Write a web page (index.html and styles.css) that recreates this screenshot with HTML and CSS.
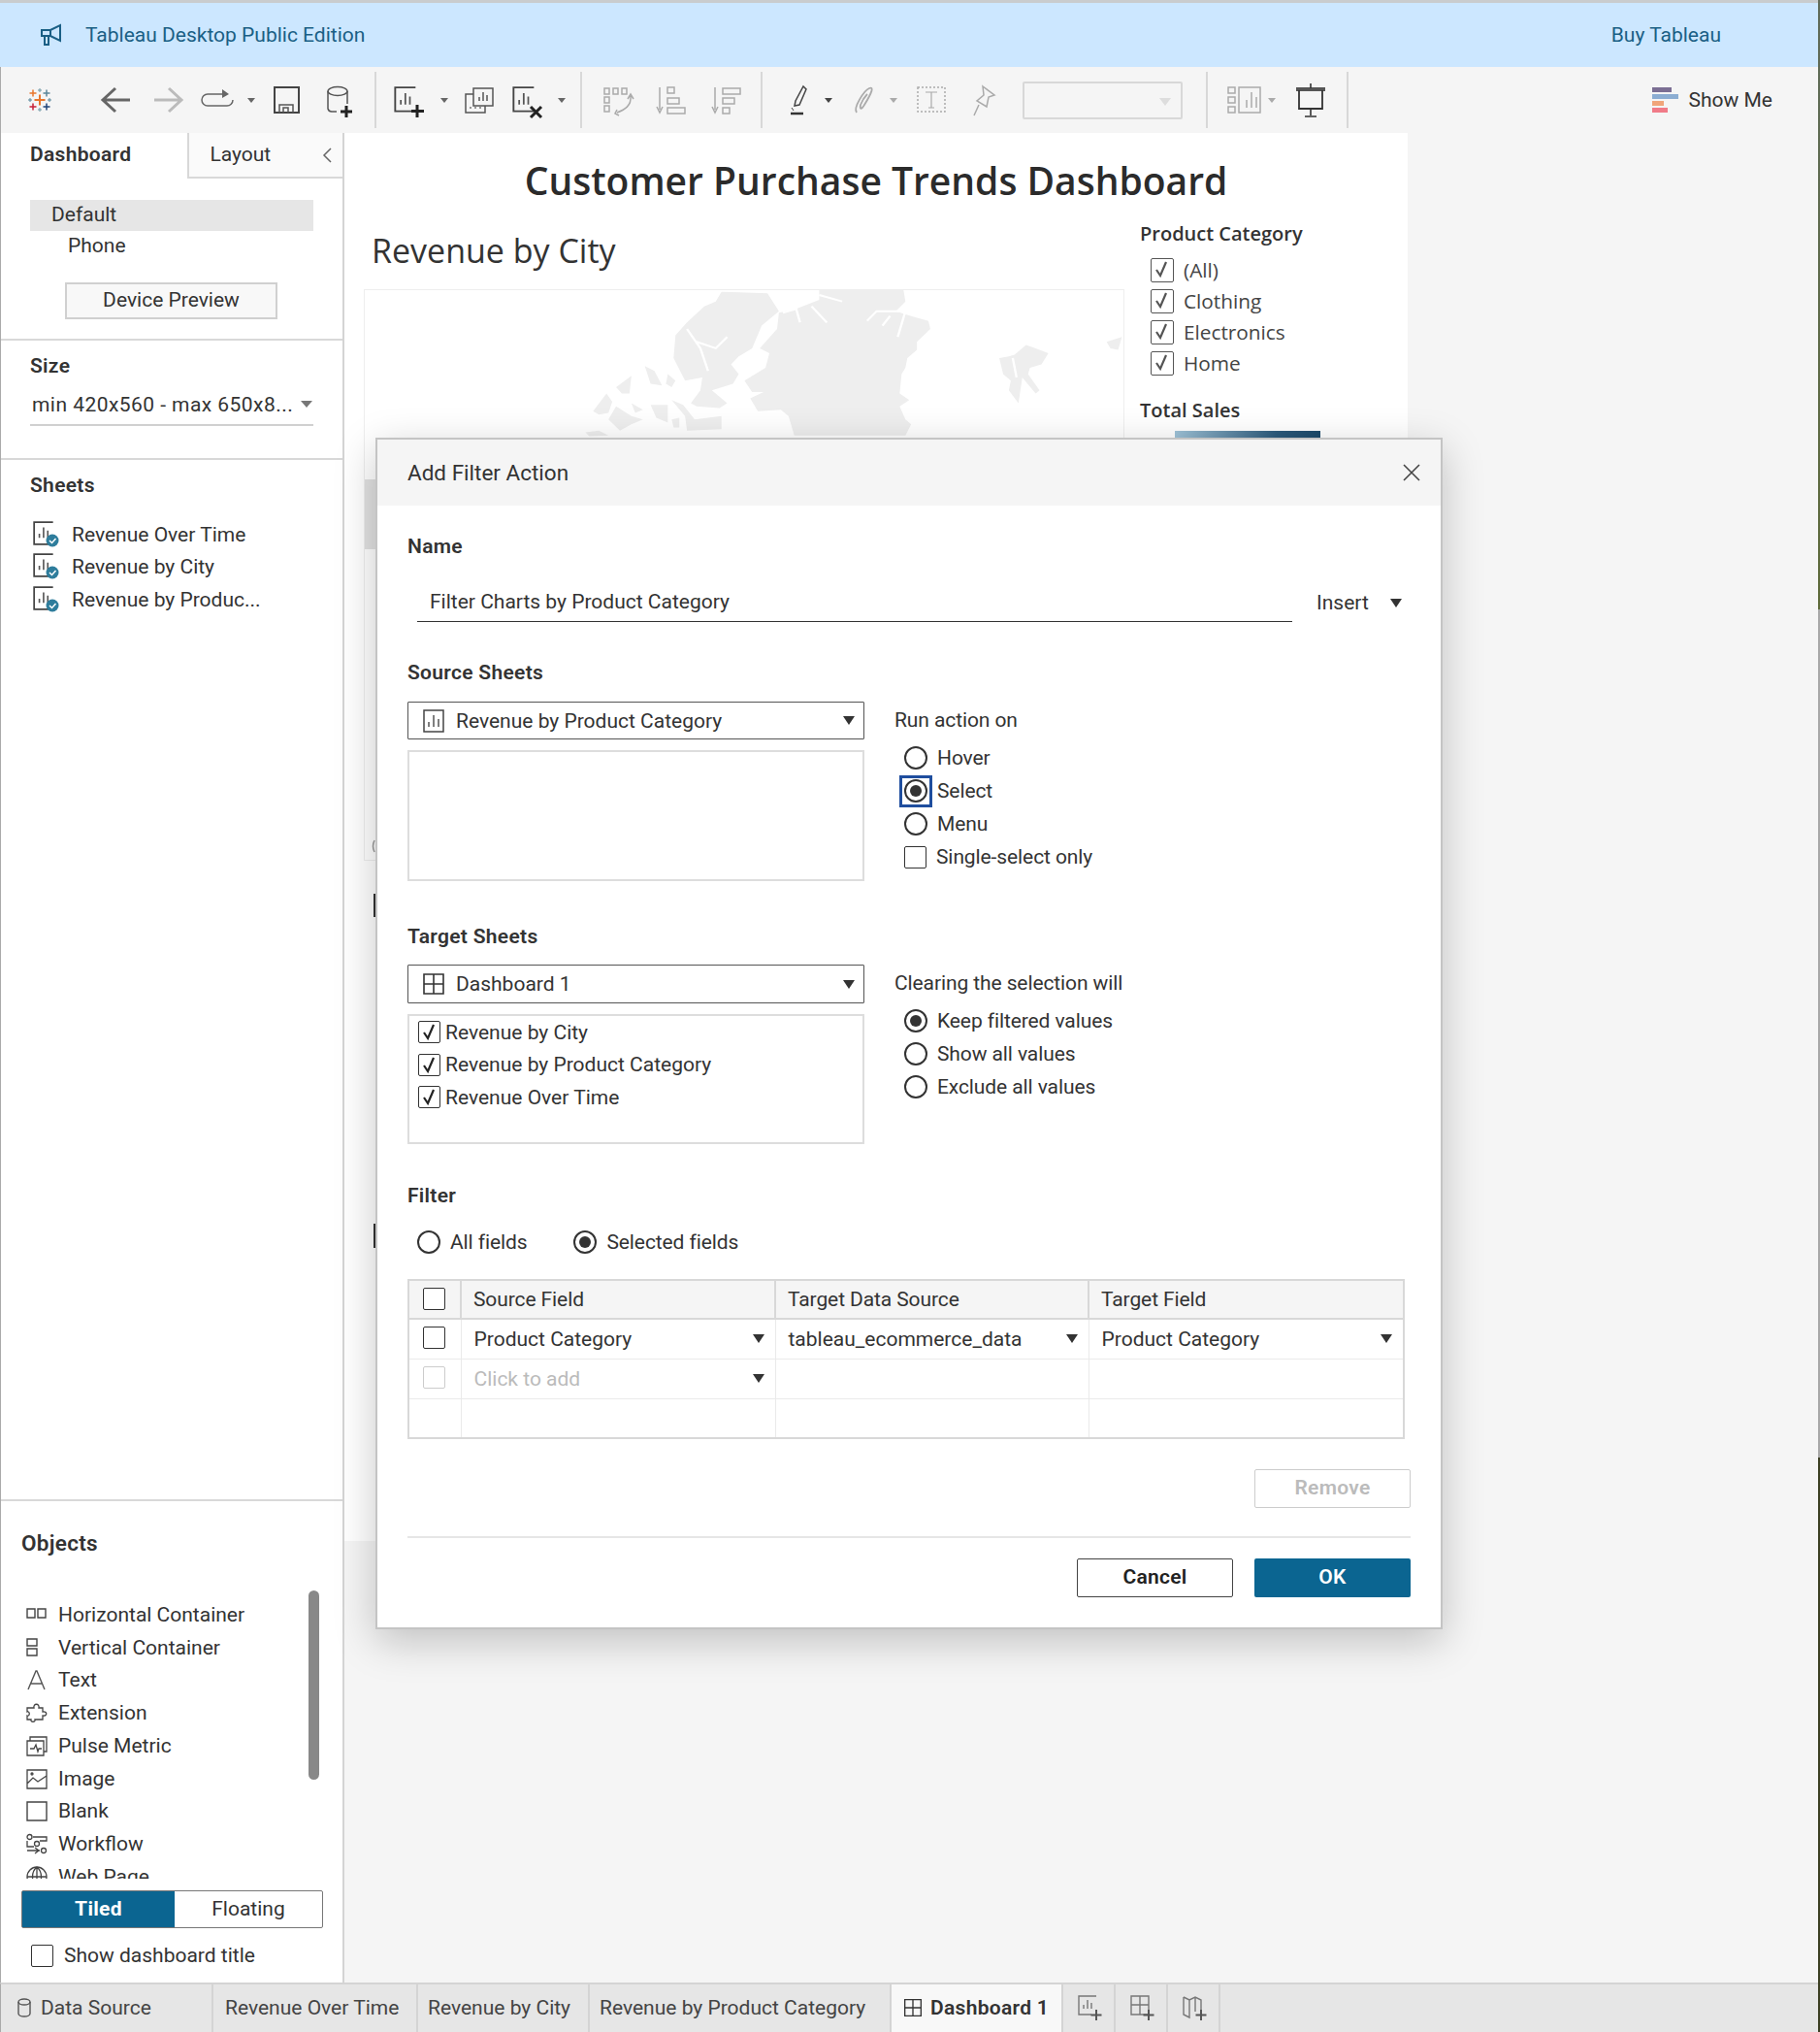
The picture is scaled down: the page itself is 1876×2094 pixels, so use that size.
FILE: index.html
```html
<!DOCTYPE html>
<html lang="en">
<head>
  <meta charset="UTF-8">
  <title>Tableau Desktop Public Edition</title>
  <link rel="stylesheet" href="styles.css">
</head>
<body>
  <svg class="defs" width="0" height="0">
    <symbol id="sheet" viewBox="0 0 24 24">
      <path d="M20 1H2V22H20" fill="none" stroke="#444" stroke-width="1.6"/>
      <path d="M7 16V12M11 16V6M15 16V9" fill="none" stroke="#555" stroke-width="1.5"/>
    </symbol>
    <symbol id="sheet-closed" viewBox="0 0 24 24">
      <path d="M2 1H22V23H2Z" fill="none" stroke="#444" stroke-width="1.5"/>
      <path d="M7 18V13M12 18V6M17 18V10" fill="none" stroke="#555" stroke-width="1.5"/>
    </symbol>
    <symbol id="dash" viewBox="0 0 24 24">
      <path d="M2 2H22V22H2ZM12 2V22M2 12H22" fill="none" stroke="#333" stroke-width="1.6"/>
    </symbol>
    <symbol id="check" viewBox="0 0 22 24">
      <path d="M6 13L10 19L16 5" fill="none" stroke="currentColor" stroke-width="2.200"/>
    </symbol>
  </svg>

  <div class="app">
    <div class="topline"></div>
    <header class="banner">
      <svg class="banner-icon" width="24" height="24" viewBox="0 0 24 24">
        <path d="M2 7H11L21 2V18L11 13H2ZM11 7V13M5 13V22H9V13" fill="none" stroke="#1a5f85" stroke-width="2"/>
      </svg>
      <span class="banner-title">Tableau Desktop Public Edition</span>
      <span class="banner-buy">Buy Tableau</span>
    </header>

    <div class="toolbar">
      <!-- logo -->
      <div class="tool-group logo-group">
        <svg width="24" height="24" viewBox="0 0 24 24" fill="none">
          <path d="M12 6.500V17.500M6.500 12H17.500" stroke="#e8762c" stroke-width="2"/>
          <path d="M5 1.500V8.500M1.500 5H8.500" stroke="#e8762c" stroke-width="1.500"/>
          <path d="M19 1.500V8.500M15.500 5H22.500" stroke="#5b879b" stroke-width="1.500"/>
          <path d="M5 15.500V22.500M1.500 19H8.500" stroke="#c72037" stroke-width="1.500"/>
          <path d="M19 15.500V22.500M15.500 19H22.500" stroke="#1f447a" stroke-width="1.500"/>
          <path d="M12 0V4M10 2H14M12 20V24M10 22H14" stroke="#7099a6" stroke-width="1"/>
          <path d="M2 10V14M0 12H4M22 10V14M20 12H24" stroke="#59879b" stroke-width="1"/>
        </svg>
      </div>

      <div class="tool-group g2">
        <svg width="54" height="40"><path d="M41 20H13M26 8L13 20L26 32" fill="none" stroke="#666" stroke-width="3"/></svg>
        <svg width="52" height="40"><path d="M12 20H40M27 8L40 20L27 32" fill="none" stroke="#bbb" stroke-width="3"/></svg>
        <svg width="50" height="40"><path d="M30 14H15a6 6 0 0 0 0 12H35a6 6 0 0 0 6 -6" fill="none" stroke="#666" stroke-width="1.500"/><path d="M30 9L37 14L30 18Z" fill="#666"/></svg>
        <svg width="20" height="40"><path d="M6 18H14L10 23Z" fill="#666"/></svg>
        <svg width="52" height="40"><path d="M14 7H39V33H14Z" fill="none" stroke="#444" stroke-width="2"/><path d="M19 33V25H33V33M23 33V28H28V33" fill="none" stroke="#555" stroke-width="1.500"/></svg>
        <svg width="56" height="40"><ellipse cx="27" cy="11" rx="10" ry="4.500" fill="none" stroke="#555" stroke-width="1.500"/><path d="M17 11V29a4 4 0 0 0 4 3H26M37 11V24" fill="none" stroke="#555" stroke-width="1.500"/><path d="M36 26V38M30 32H42" stroke="#222" stroke-width="3"/></svg>
      </div>
      <div class="tool-sep"></div>

      <div class="tool-group g3">
        <svg width="50" height="40"><use href="#sheet" x="8" y="6" width="28" height="28"/><path d="M33 25V38M27 31.500H40" stroke="#222" stroke-width="3"/></svg>
        <svg width="22" height="40"><path d="M7 18H15L11 23Z" fill="#666"/></svg>
        <svg width="50" height="40"><path d="M19 8H39V26H19ZM19 14H11V33H31V26" fill="none" stroke="#555" stroke-width="1.500"/><path d="M25 21V17M29 21V12M33 21V15" stroke="#555" stroke-width="1.500"/><path d="M16 29V27M21 29V27M26 29V27" stroke="#777" stroke-width="1.500"/></svg>
        <svg width="50" height="40"><use href="#sheet" x="8" y="6" width="28" height="28"/><path d="M28 27L39 38M39 27L28 38" stroke="#222" stroke-width="3"/></svg>
        <svg width="20" height="40"><path d="M6 18H14L10 23Z" fill="#666"/></svg>
      </div>
      <div class="tool-sep"></div>

      <div class="tool-group g4">
        <svg width="55" height="40" fill="none" stroke="#aaa" stroke-width="1.500"><path d="M12 8h5v6h-5zM21 8h5v6h-5zM30 8h5v6h-5zM12 17h5v6h-5zM12 26h5v6h-5z"/><path d="M39 16C40 26 33 30 25 33M25 30L23 34L27 36M36 19L39 14L42 19"/></svg>
        <svg width="62" height="40" fill="none" stroke="#aaa" stroke-width="1.500"><path d="M14 7V30M11 27L14 33L17 27"/><path d="M22 7h7v6h-7zM22 18h12v6h-12zM22 28h18v6h-18z"/></svg>
        <svg width="52" height="40" fill="none" stroke="#aaa" stroke-width="1.500"><path d="M9 7V30M6 27L9 33L12 27"/><path d="M17 8h18v6h-18zM17 18h12v6h-12zM17 28h7v6h-7z"/></svg>
      </div>
      <div class="tool-sep"></div>

      <div class="tool-group g5">
        <svg width="44" height="40" fill="none"><path d="M27 6L30 9L23 25L18 26L19 21Z" stroke="#444" stroke-width="1.500"/><path d="M14 34H27" stroke="#333" stroke-width="2.500"/><path d="M15 28L17 31" stroke="#444"/></svg>
        <svg width="20" height="40"><path d="M5 18H13L9 23Z" fill="#444"/></svg>
        <svg width="50" height="40" fill="none"><path d="M18 33C14 28 26 10 31 8C36 6 34 12 26 25C23 30 21 30 22 25C24 20 27 16 29 14" stroke="#aaa" stroke-width="1.800"/></svg>
        <svg width="22" height="40"><path d="M2 18H10L6 23Z" fill="#aaa"/></svg>
        <svg width="46" height="40" fill="none"><path d="M9 7H37V32H9Z" stroke="#aaa" stroke-width="1.500" stroke-dasharray="2 2"/><path d="M17 12H29M23 12V28M20 28H26" stroke="#aaa" stroke-width="1.200"/></svg>
        <svg width="62" height="40" fill="none"><path d="M30 6L42 15L36 17L34 27L24 21L31 15ZM26 25L21 36" stroke="#aaa" stroke-width="1.500"/></svg>
        <div class="tool-combo"><i class="caret-light"></i></div>
      </div>
      <div class="tool-sep"></div>

      <div class="tool-group g6">
        <svg width="40" height="40" fill="none" stroke="#aaa" stroke-width="1.500"><path d="M3 7h7v6h-7zM3 17h7v6h-7zM3 27h7v6h-7zM14 7H36V33H14ZM22 28V20M27 28V12M32 28V17"/></svg>
        <svg width="23" height="40"><path d="M4 18H12L8 23Z" fill="#aaa"/></svg>
        <svg width="50" height="40" fill="none"><path d="M10 9H40" stroke="#555" stroke-width="4"/><path d="M13 10V29H37V10" stroke="#333" stroke-width="1.800"/><path d="M25 29V36M19 37H31M25 3V8" stroke="#333" stroke-width="1.600"/></svg>
      </div>
      <div class="tool-sep"></div>

      <div class="show-me">
        <svg width="32" height="28"><path d="M1 1H21V6H1Z" fill="#7b6e93"/><path d="M1 8H28V13H1Z" fill="#8cadd2"/><path d="M1 15H13V20H1Z" fill="#f0a57a"/><path d="M1 22H17V27H1Z" fill="#f07b88"/></svg>
        <span>Show Me</span>
      </div>
    </div>

    <div class="workspace">
      <aside class="side">
        <div class="side-tabs">
          <div class="side-tab active">Dashboard</div>
          <div class="side-tab">Layout
            <svg class="collapse" width="12" height="18"><path d="M10 2L3 9L10 16" fill="none" stroke="#666" stroke-width="1.500"/></svg>
          </div>
        </div>

        <section class="device">
          <div class="device-row selected">Default</div>
          <div class="device-row phone">Phone</div>
          <div class="device-btn">Device Preview</div>
        </section>

        <section class="size">
          <h4>Size</h4>
          <div class="size-select">min 420x560 - max 650x8...<i class="caret gray"></i></div>
        </section>

        <section class="sheets">
          <h4>Sheets</h4>
          <ul class="sheet-list">
            <li><svg width="30" height="28"><use href="#sheet" x="0" y="0" width="26" height="26"/><circle cx="21" cy="20" r="6.500" fill="#2e7d9c"/><path d="M18 20L20.500 22.500L24.500 18" fill="none" stroke="#fff" stroke-width="1.500"/></svg>Revenue Over Time</li>
            <li><svg width="30" height="28"><use href="#sheet" x="0" y="0" width="26" height="26"/><circle cx="21" cy="20" r="6.500" fill="#2e7d9c"/><path d="M18 20L20.500 22.500L24.500 18" fill="none" stroke="#fff" stroke-width="1.500"/></svg>Revenue by City</li>
            <li><svg width="30" height="28"><use href="#sheet" x="0" y="0" width="26" height="26"/><circle cx="21" cy="20" r="6.500" fill="#2e7d9c"/><path d="M18 20L20.500 22.500L24.500 18" fill="none" stroke="#fff" stroke-width="1.500"/></svg>Revenue by Produc...</li>
          </ul>
        </section>

        <section class="objects">
          <h4>Objects</h4>
          <div class="object-wrap">
            <ul class="object-list">
              <li><svg width="22" height="22" fill="none" stroke="#444" stroke-width="1.400"><path d="M1 5h8v9h-8zM12 5h8v9h-8z"/></svg>Horizontal Container</li>
              <li><svg width="22" height="22" fill="none" stroke="#444" stroke-width="1.400"><path d="M1 2h10v7h-10zM1 12h10v7h-10z"/></svg>Vertical Container</li>
              <li><svg width="22" height="22" fill="none" stroke="#555" stroke-width="1.400"><path d="M2 21L10 2H11L19 21M5 15H16"/></svg>Text</li>
              <li><svg width="22" height="22" fill="none" stroke="#444" stroke-width="1.300"><path d="M8 6C7 1 14 1 13 6H17V10C22 9 22 15 17 14V18H9C10 21 4 21 5 18H1V14C4 15 4 9 1 10V6Z"/></svg>Extension</li>
              <li><svg width="22" height="22" fill="none" stroke="#444" stroke-width="1.300"><path d="M1 6h17v15h-17zM4 6V2H21V17H18M4 14H8L10 10L12 17L13 14H16"/></svg>Pulse Metric</li>
              <li><svg width="22" height="22" fill="none" stroke="#444" stroke-width="1.300"><path d="M1 2h20v19h-20zM1 16L7 10L12 14L21 8"/><circle cx="6" cy="6" r="1"/></svg>Image</li>
              <li><svg width="22" height="22" fill="none" stroke="#444" stroke-width="1.400"><path d="M1 2h20v19h-20z"/></svg>Blank</li>
              <li><svg width="22" height="22" fill="none" stroke="#444" stroke-width="1.300"><circle cx="3.500" cy="4" r="2.500"/><circle cx="11" cy="11" r="2.500"/><circle cx="18" cy="18" r="2.500"/><path d="M7 4H21V8H14M1 8V14H8M1 18H14M9 15L13 18L9 21"/></svg>Workflow</li>
              <li><svg width="22" height="22" fill="none" stroke="#444" stroke-width="1.300"><circle cx="11" cy="11" r="10"/><path d="M1 11H21M1 16H21M11 1V21M11 1C5 6 5 16 11 21M11 1C17 6 17 16 11 21"/></svg>Web Page</li>
            </ul>
            <div class="scroll-thumb"></div>
          </div>
          <div class="seg">
            <div class="seg-item on">Tiled</div>
            <div class="seg-item">Floating</div>
          </div>
          <div class="show-title"><span class="cb big"></span>Show dashboard title</div>
        </section>
      </aside>

      <main class="canvas">
        <div class="dash">
          <h1>Customer Purchase Trends Dashboard</h1>
          <div class="dash-row">
            <div class="dash-left">
              <h2>Revenue by City</h2>
              <div class="map">
                <svg width="784" height="589">
                  <path d="M0 196H12V268H0Z" fill="#e2e2e2"/>
                  <path d="M11 568Q8 574 11 580" fill="none" stroke="#999" stroke-width="1.500"/>
                  <g transform="translate(185,-9) scale(0.395,0.333)" fill="#eeeeee">
                    <polygon points="720,30 940,30 945,65 920,95 960,110 1005,125 1010,150 975,190 975,215 950,240 945,270 935,290 930,350 955,370 930,390 945,430 960,445 945,480 655,480 640,420 620,400 560,405 540,365 575,345 545,345 525,310 580,270 590,225 565,210 610,150 615,100 660,88 720,60"/>
                    <polygon points="465,35 585,40 615,95 570,140 545,210 510,235 490,260 510,290 495,320 440,340 480,380 460,395 400,390 385,380 410,340 415,300 370,310 340,240 345,170 375,130 420,80 450,65"/>
                    <polygon points="265,265 290,280 310,325 280,320"/>
                    <polygon points="190,330 230,295 225,350 205,350"/>
                    <polygon points="130,405 165,350 180,375 170,410 145,415"/>
                    <polygon points="170,430 190,390 230,420 260,430 230,445 200,465"/>
                    <polygon points="230,380 260,400 240,410"/>
                    <polygon points="280,385 325,385 325,440 295,425"/>
                    <polygon points="335,370 365,385 395,430 465,420 465,460 375,465 370,420"/>
                    <polygon points="110,470 145,465 170,480 120,482"/>
                    <polygon points="335,430 355,425 355,455 340,455"/>
                    <polygon points="325,290 345,310 335,330 320,320"/>
                    <polygon points="1190,240 1215,235 1230,230 1260,200 1285,210 1318,225 1300,260 1270,270 1265,290 1295,340 1285,350 1250,300 1240,380 1215,340 1220,310 1200,290"/>
                    <polygon points="1470,190 1510,175 1500,215 1480,210"/>
                    <g fill="none" stroke="#fff" stroke-width="6">
                      <path d="M375 150L410 210L430 280M400 190L450 210L480 175"/>
                      <path d="M625 100L660 88L670 130M700 80L740 130M720 45L780 65"/>
                      <path d="M845 125L870 95H945L925 175M905 110L885 140"/>
                      <path d="M1225 240L1235 300"/>
                    </g>
                  </g>
                </svg>
              </div>
              <div class="stub first"></div>
              <div class="stub second"></div>
            </div>
            <div class="dash-right">
              <h3>Product Category</h3>
              <div class="f-item"><span class="cb gray"><svg width="22" height="24"><use href="#check"/></svg></span>(All)</div>
              <div class="f-item"><span class="cb gray"><svg width="22" height="24"><use href="#check"/></svg></span>Clothing</div>
              <div class="f-item"><span class="cb gray"><svg width="22" height="24"><use href="#check"/></svg></span>Electronics</div>
              <div class="f-item"><span class="cb gray"><svg width="22" height="24"><use href="#check"/></svg></span>Home</div>
              <h3 class="total">Total Sales</h3>
              <div class="legend"></div>
            </div>
          </div>
        </div>
      </main>
    </div>

    <footer class="tabbar">
      <div class="tab t-source"><svg width="14" height="20" fill="none" stroke="#555" stroke-width="1.400"><ellipse cx="7" cy="4" rx="6" ry="3"/><path d="M1 4V16a6 3 0 0 0 12 0V4"/></svg>Data Source</div>
      <div class="tab t-a">Revenue Over Time</div>
      <div class="tab t-b">Revenue by City</div>
      <div class="tab t-c">Revenue by Product Category</div>
      <div class="tab t-dash"><svg width="20" height="20"><use href="#dash"/></svg>Dashboard 1</div>
      <div class="tab t-add"><svg width="28" height="28" fill="none"><path d="M21 2H3V21H16M8 15V11M12 15V6M16 15V9" stroke="#777" stroke-width="1.400"/><path d="M21 16V27M15.500 21.500H26.500" stroke="#555" stroke-width="2"/></svg></div>
      <div class="tab t-add"><svg width="28" height="28" fill="none"><path d="M3 2H21V21H3ZM12 2V21M3 11H21" stroke="#777" stroke-width="1.400"/><path d="M21 16V27M15.500 21.500H26.500" stroke="#555" stroke-width="2"/></svg></div>
      <div class="tab t-add"><svg width="28" height="28" fill="none"><path d="M3 3L9 6L15 3L21 6V16M3 3V21L9 24V6M15 3V18" stroke="#777" stroke-width="1.400"/><path d="M21 16V27M15.500 21.500H26.500" stroke="#555" stroke-width="2"/></svg></div>
    </footer>
  </div>
  <div class="edge"></div>

  <!-- Add Filter Action dialog -->
  <div class="dialog">
    <div class="dialog-head">
      <span>Add Filter Action</span>
      <svg width="20" height="20"><path d="M2 2L18 18M18 2L2 18" stroke="#444" stroke-width="1.600"/></svg>
    </div>
    <div class="dialog-body">
      <div class="label name-label">Name</div>
      <div class="name-row">
        <div class="name-input">Filter Charts by Product Category</div>
        <div class="insert">Insert<i class="caret"></i></div>
      </div>

      <div class="label src-label">Source Sheets</div>
      <div class="two-col">
        <div class="col-left">
          <div class="drop"><svg width="24" height="24"><use href="#sheet-closed"/></svg>Revenue by Product Category<i class="caret"></i></div>
          <div class="list-box"></div>
        </div>
        <div class="col-right">
          <div class="col-title">Run action on</div>
          <div class="opt"><span class="radio"></span>Hover</div>
          <div class="opt"><span class="radio on focus"></span>Select</div>
          <div class="opt"><span class="radio"></span>Menu</div>
          <div class="opt"><span class="cb"></span>Single-select only</div>
        </div>
      </div>

      <div class="label tgt-label">Target Sheets</div>
      <div class="two-col">
        <div class="col-left">
          <div class="drop tall"><svg width="24" height="24"><use href="#dash"/></svg>Dashboard 1<i class="caret"></i></div>
          <div class="list-box targets">
            <div class="t-row"><span class="cb"><svg width="22" height="24"><use href="#check"/></svg></span>Revenue by City</div>
            <div class="t-row"><span class="cb"><svg width="22" height="24"><use href="#check"/></svg></span>Revenue by Product Category</div>
            <div class="t-row"><span class="cb"><svg width="22" height="24"><use href="#check"/></svg></span>Revenue Over Time</div>
          </div>
        </div>
        <div class="col-right">
          <div class="col-title">Clearing the selection will</div>
          <div class="opt"><span class="radio on"></span>Keep filtered values</div>
          <div class="opt"><span class="radio"></span>Show all values</div>
          <div class="opt"><span class="radio"></span>Exclude all values</div>
        </div>
      </div>

      <div class="label filter-label">Filter</div>
      <div class="filter-radios">
        <div class="opt"><span class="radio"></span>All fields</div>
        <div class="opt"><span class="radio on"></span>Selected fields</div>
      </div>

      <table class="fields">
        <thead>
          <tr><th class="c-cb"><span class="cb"></span></th><th>Source Field</th><th>Target Data Source</th><th>Target Field</th></tr>
        </thead>
        <tbody>
          <tr><td class="c-cb"><span class="cb"></span></td><td><div class="cell">Product Category<i class="caret"></i></div></td><td><div class="cell">tableau_ecommerce_data<i class="caret"></i></div></td><td><div class="cell">Product Category<i class="caret"></i></div></td></tr>
          <tr><td class="c-cb"><span class="cb faint"></span></td><td><div class="cell muted">Click to add<i class="caret"></i></div></td><td></td><td></td></tr>
          <tr class="last"><td></td><td></td><td></td><td></td></tr>
        </tbody>
      </table>

      <div class="remove-row"><div class="btn disabled">Remove</div></div>
      <div class="dialog-line"></div>
      <div class="foot-row">
        <div class="btn cancel">Cancel</div>
        <div class="btn ok">OK</div>
      </div>
    </div>
  </div>
</body>
</html>
```

FILE: styles.css
```css
*, *::before, *::after { box-sizing: border-box; }

body {
  margin: 0;
  display: flex;
  font-family: Roboto, "Liberation Sans", sans-serif;
  font-size: 21px;
  color: #333;
  background: #f5f5f5;
}

.defs { position: absolute; }

i { font-style: normal; display: block; }

.app {
  width: 1874px;
  height: 2094px;
  display: flex;
  flex-direction: column;
  overflow: hidden;
}

/* Strip of desktop behind the window */
.edge {
  width: 2px;
  height: 2094px;
  background: linear-gradient(#5f6b5a 0, #5e6a3a 628px, #a8a8a8 628px, #a8a8a8 1502px, #3c3f22 1502px, #3c3f22 100%);
}

.topline { height: 3px; background: #c9ccce; }

/* Banner */
.banner {
  height: 66px;
  background: #cce7ff;
  display: flex;
  align-items: center;
  padding-left: 41px;
  color: #1a5f85;
}
.banner-title { margin-left: 23px; }
.banner-buy { margin-left: auto; margin-right: 100px; }

/* Toolbar */
.toolbar {
  height: 68px;
  display: flex;
  align-items: center;
  background: #f5f5f5;
  border-left: 1px solid #aaa;
}
.tool-group { display: flex; align-items: center; }
.tool-sep { width: 2px; height: 58px; background: #d8d8d8; flex: none; }
.logo-group { width: 80px; justify-content: center; }
.g2 { width: 305px; padding-left: 12px; }
.g3 { width: 210px; padding-left: 9px; }
.g4 { width: 184px; padding-left: 11px; }
.g5 { width: 457px; padding-left: 15px; }
.g6 { width: 143px; padding-left: 18px; }
.tool-combo {
  width: 165px;
  height: 39px;
  margin-left: 9px;
  border: 2px solid #d8d8d8;
  border-radius: 2px;
  position: relative;
}
.caret-light {
  position: absolute;
  right: 10px;
  top: 15px;
  border-left: 6px solid transparent;
  border-right: 6px solid transparent;
  border-top: 8px solid #ddd;
}
.show-me {
  margin-left: auto;
  margin-right: 47px;
  display: flex;
  align-items: center;
  gap: 7px;
}

/* Workspace */
.workspace { flex: 1; display: flex; min-height: 0; }

.side {
  width: 355px;
  flex: none;
  display: flex;
  flex-direction: column;
  background: #fff;
  border-left: 1px solid #aaa;
  border-right: 2px solid #d4d4d4;
}
.side h4 { margin: 0; font-size: 21px; font-weight: 600; letter-spacing: 0.3px; color: #333; line-height: 28px; }

.side-tabs { height: 47px; display: flex; }
.side-tab {
  padding-left: 21px;
  line-height: 45px;
  width: 160px;
  background: #fafafa;
  border-left: 2px solid #d8d8d8;
  border-bottom: 2px solid #d8d8d8;
  position: relative;
}
.side-tab.active {
  width: 193px;
  background: #fff;
  border: none;
  padding-left: 30px;
  font-weight: 600;
  letter-spacing: 0.3px;
}
.collapse { position: absolute; right: 10px; top: 14px; }

.device { height: 167px; padding: 22px 30px 0; border-bottom: 2px solid #d8d8d8; }
.device-row { height: 32px; line-height: 30px; padding-left: 22px; width: 292px; }
.device-row.selected { background: #e6e6e6; }
.device-row.phone { padding-left: 39px; }
.device-btn {
  width: 219px;
  height: 38px;
  margin: 21px 0 0 36px;
  background: #f8f8f8;
  border: 2px solid #d0d0d0;
  text-align: center;
  line-height: 33px;
}

.size { height: 123px; padding: 12px 30px 0; border-bottom: 2px solid #d8d8d8; }
.size-select {
  height: 48px;
  padding: 5px 0 0 2px;
  border-bottom: 2px solid #d0d0d0;
  display: flex;
  align-items: center;
  justify-content: space-between;
  white-space: nowrap;
  width: 292px;
  letter-spacing: 0.45px;
}
.size-select .caret { margin-right: 1px; }

.sheets { flex: 1; padding: 12px 0 0 30px; border-bottom: 2px solid #d8d8d8; }
.sheet-list { list-style: none; margin: 20px 0 0; padding: 0; }
.sheet-list li { height: 33.500px; display: flex; align-items: center; gap: 11px; }
.sheet-list svg { margin-left: 2px; }

.objects { height: 496px; padding: 29px 0 0 21px; position: relative; }
.side .objects h4 { font-size: 22.500px; }
.object-wrap { position: relative; height: 289px; margin-top: 43px; }
.object-list { list-style: none; margin: 0; padding: 0; height: 289px; overflow: hidden; }
.object-list li { height: 33.750px; display: flex; align-items: center; gap: 11px; padding-left: 5px; }
.scroll-thumb {
  position: absolute;
  left: 296px;
  top: -8px;
  width: 11px;
  height: 195px;
  border-radius: 6px;
  background: #888;
}

.seg {
  width: 311px;
  height: 39px;
  margin-top: 12px;
  display: flex;
  border: 1px solid #777;
  border-radius: 2px;
}
.seg-item { flex: 1; text-align: center; line-height: 36px; }
.seg-item.on { flex: none; width: 157px; background: #0b6591; color: #fff; font-weight: 700; letter-spacing: 0.3px; }

.show-title { display: flex; align-items: center; gap: 11px; margin: 16px 0 0 10px; }
.cb.big { width: 23px; height: 23px; }

/* Checkbox and radio */
.cb {
  width: 23px;
  height: 23px;
  flex: none;
  border: 1.800px solid #333;
  border-radius: 2px;
  color: #222;
  display: inline-block;
  background: #fff;
  position: relative;
}
.cb svg { position: absolute; left: -1px; top: -2px; }
.cb.gray { width: 24px; height: 25px; color: #555; border-color: #555; }
.cb.faint { border-color: #ccc; }

.radio {
  width: 24px;
  height: 24px;
  flex: none;
  border: 2px solid #333;
  border-radius: 50%;
  display: inline-block;
  position: relative;
}
.radio.on::after {
  content: "";
  position: absolute;
  left: 4px;
  top: 4px;
  width: 12px;
  height: 12px;
  border-radius: 50%;
  background: #333;
}
/* keyboard focus ring is square around the round button */
.radio.focus::before {
  content: "";
  position: absolute;
  left: -7px;
  top: -6px;
  width: 34px;
  height: 33px;
  border: 3px solid #1f4e9e;
}

.caret {
  width: 0;
  height: 0;
  border-left: 6.500px solid transparent;
  border-right: 6.500px solid transparent;
  border-top: 9px solid #333;
}
.caret.gray { border-top-color: #777; border-top-width: 7px; border-left-width: 6px; border-right-width: 6px; }

/* Dashboard canvas */
.canvas { flex: 1; background: #f5f5f5; }
.dash { width: 1096px; height: 1451px; background: #fff; padding-left: 20px; font-family: "Open Sans", sans-serif; }
.dash h1 {
  margin: 0;
  height: 78px;
  font-size: 39px;
  font-weight: 600;
  line-height: 98px;
  text-align: center;
  color: #2b2b2b;
  padding-right: 20px;
  white-space: nowrap;
}
.dash-row { display: flex; }
.dash-left { width: 784px; }
.dash h2 {
  margin: 21px 0 1px 8px;
  font-size: 34px;
  font-weight: 400;
  line-height: 44px;
  height: 44px;
  white-space: nowrap;
  color: #333;
}
.map { width: 784px; height: 589px; margin-top: 18px; border: 1px solid #eee; overflow: hidden; }
.map svg { display: block; margin: -1px; }

/* Headings of the charts behind the dialog: only their first stem shows */
.stub { width: 2px; margin-left: 10px; background: #333; }
.stub.first { height: 24px; margin-top: 34px; }
.stub.second { height: 25px; margin-top: 316px; }

.dash-right { margin-left: 16px; padding-top: 13px; }
.dash h3 { margin: 0 0 8px; font-size: 20px; font-weight: 600; line-height: 26px; color: #333; }
.f-item { height: 32px; display: flex; align-items: center; gap: 10px; padding-left: 11px; color: #444; font-size: 20.800px; }
.dash h3.total { margin: 20px 0 8px; }
.legend { width: 150px; height: 20px; margin-left: 36px; background: linear-gradient(90deg, #9fc3d8, #2c5a7c 70%, #1c4a6a); }

/* Bottom tabs */
.tabbar {
  height: 51px;
  display: flex;
  background: #e6e6e6;
  border-top: 2px solid #d4d4d4;
  border-left: 1px solid #aaa;
  color: #444;
}
.tab {
  display: flex;
  align-items: center;
  height: 100%;
  padding: 0 0 2px 10px;
  border-right: 2px solid #d4d4d4;
  white-space: nowrap;
}
.t-source { width: 219px; gap: 10px; padding-left: 17px; }
.t-a { width: 211px; padding-left: 12px; }
.t-b { width: 177px; }
.t-c { width: 311px; }
.t-dash { width: 177px; background: #f8f8f8; gap: 8px; padding-left: 12px; font-weight: 600; letter-spacing: 0.3px; color: #333; }
.t-add { width: 54px; padding-left: 13px; }

/* Dialog */
.dialog {
  position: absolute;
  left: 387px;
  top: 451px;
  width: 1100px;
  height: 1228px;
  background: #fff;
  border: 2px solid #c4c4c4;
  box-shadow: 0 12px 40px rgba(0, 0, 0, 0.22);
}
.dialog-head {
  height: 68px;
  background: #f5f5f5;
  display: flex;
  align-items: center;
  justify-content: space-between;
  padding: 0 20px 0 31px;
  font-size: 22.500px;
}
.dialog-body { padding: 0 31px 0 31px; }
.label { font-weight: 600; letter-spacing: 0.3px; line-height: 28px; height: 28px; }
.name-label { margin-top: 28px; }

.name-row { display: flex; align-items: flex-end; margin-top: 24px; height: 40px; }
.name-input {
  width: 902px;
  height: 40px;
  margin-left: 10px;
  padding-left: 13px;
  line-height: 38px;
  border-bottom: 1.500px solid #333;
}
.insert { width: 114px; display: flex; align-items: center; justify-content: space-between; padding: 0 1px 0 25px; height: 40px; }

.src-label { margin-top: 38px; }
.tgt-label { margin-top: 43px; }
.two-col { display: flex; margin-top: 16px; gap: 31px; }
.tgt-label + .two-col { margin-top: 15px; }
.col-left { width: 471px; }

.drop {
  height: 39px;
  border: 1.500px solid #555;
  display: flex;
  align-items: center;
  padding-left: 14px;
  gap: 11px;
  border-radius: 1px;
}
.drop.tall { height: 40px; }
.drop .caret { margin-left: auto; margin-right: 9px; }

.list-box { height: 135px; margin-top: 11px; border: 2px solid #ddd; }
.targets { height: 134px; }
.t-row { height: 33.500px; display: flex; align-items: center; gap: 5px; padding-left: 9px; }

.col-title { height: 41px; line-height: 39px; white-space: nowrap; letter-spacing: -0.1px; }
.opt { height: 34px; display: flex; align-items: center; gap: 10px; padding-left: 10px; white-space: nowrap; letter-spacing: -0.1px; }

.filter-label { margin-top: 39px; }
.filter-radios { display: flex; margin-top: 17px; height: 34px; }
.filter-radios .opt { padding-left: 10px; margin-right: 38px; }

.fields {
  width: 1028px;
  margin-top: 21px;
  border-collapse: collapse;
  table-layout: fixed;
  border: 2px solid #d8d8d8;
}
.fields th {
  height: 40px;
  background: #f5f5f5;
  font-weight: 400;
  text-align: left;
  padding: 0 0 0 12px;
  border: 2px solid #d8d8d8;
  letter-spacing: -0.1px;
}
.fields td { height: 41px; padding: 0 0 0 13px; border: 1.500px solid #eaeaea; }
.fields .last td { height: 41px; }
.fields .c-cb { width: 54px; padding: 3px 0 0 14px; }
.fields th:nth-child(2) { width: 324px; }
.fields th:nth-child(3) { width: 323px; }
.cell { display: flex; align-items: center; justify-content: space-between; padding-right: 11px; white-space: nowrap; }
.muted { color: #bbb; }

.btn {
  width: 161px;
  height: 40px;
  border-radius: 2px;
  text-align: center;
  line-height: 36px;
  font-weight: 600;
  letter-spacing: 0.3px;
}
.remove-row { display: flex; justify-content: flex-end; margin-top: 31px; }
.btn.disabled { border: 1.500px solid #ccc; color: #bbb; }
.dialog-line { height: 2px; background: #e6e6e6; margin-top: 29px; }
.foot-row { display: flex; justify-content: flex-end; gap: 22px; margin-top: 21px; }
.btn.cancel { border: 1.500px solid #444; color: #222; }
.btn.ok { background: #0b6591; color: #fff; line-height: 38px; }
```
